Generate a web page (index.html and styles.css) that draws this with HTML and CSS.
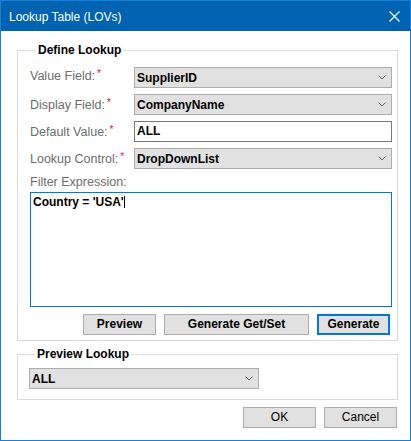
FILE: index.html
```html
<!DOCTYPE html>
<html lang="en">
<head>
<meta charset="utf-8">
<title>Lookup Table (LOVs)</title>
<link rel="stylesheet" href="styles.css">
</head>
<body>
<div class="window">
  <div class="titlebar">
    <span class="title">Lookup Table (LOVs)</span>
    <svg class="close" width="11" height="11" viewBox="0 0 11 11"><path d="M0.5 0.5 L10.5 10.5 M10.5 0.5 L0.5 10.5" stroke="#fff" stroke-width="1.1" fill="none"/></svg>
  </div>
  <div class="client">
    <fieldset class="group group-define">
      <legend>Define Lookup</legend>
      <div class="form">
        <label class="lbl lbl-first">Value Field:<span class="req">*</span></label>
        <div class="combo"><span class="combo-text">SupplierID</span><svg class="chev" width="8" height="5" viewBox="0 0 8 5"><polyline points="0.5,0.5 4,4 7.5,0.5" fill="none" stroke="#6a6a6a" stroke-width="1"/></svg></div>
        <label class="lbl">Display Field:<span class="req">*</span></label>
        <div class="combo"><span class="combo-text">CompanyName</span><svg class="chev" width="8" height="5" viewBox="0 0 8 5"><polyline points="0.5,0.5 4,4 7.5,0.5" fill="none" stroke="#6a6a6a" stroke-width="1"/></svg></div>
        <label class="lbl">Default Value:<span class="req">*</span></label>
        <div class="textbox">ALL</div>
        <label class="lbl">Lookup Control:<span class="req">*</span></label>
        <div class="combo"><span class="combo-text">DropDownList</span><svg class="chev" width="8" height="5" viewBox="0 0 8 5"><polyline points="0.5,0.5 4,4 7.5,0.5" fill="none" stroke="#6a6a6a" stroke-width="1"/></svg></div>
      </div>
      <div class="filter-label">Filter Expression:</div>
      <div class="textarea"><span class="ta-text">Country = 'USA'</span><span class="caret"></span></div>
      <div class="actions">
        <button class="btn btn-bold btn-preview">Preview</button>
        <button class="btn btn-bold btn-wide">Generate Get/Set</button>
        <button class="btn btn-bold btn-default">Generate</button>
      </div>
    </fieldset>
    <fieldset class="group group-preview">
      <legend>Preview Lookup</legend>
      <div class="combo combo-preview"><span class="combo-text">ALL</span><svg class="chev" width="8" height="5" viewBox="0 0 8 5"><polyline points="0.5,0.5 4,4 7.5,0.5" fill="none" stroke="#6a6a6a" stroke-width="1"/></svg></div>
    </fieldset>
    <div class="footer">
      <button class="btn">OK</button>
      <button class="btn">Cancel</button>
    </div>
  </div>
</div>
</body>
</html>
```

FILE: styles.css
```css
* { box-sizing: border-box; }
html, body { margin: 0; padding: 0; background: #ffffff; }
body { font-family: "Liberation Sans", Arial, sans-serif; font-size: 12px; }

.window {
  width: 411px;
  height: 441px;
  border: 1px solid #1a7fd6;
  background: #ffffff;
  display: flex;
  flex-direction: column;
}

.titlebar {
  height: 30px;
  background: #0063b1;
  display: flex;
  align-items: center;
  justify-content: space-between;
  padding: 0 10px 0 8px;
  flex: none;
}
.title {
  color: #ffffff;
  font-size: 12px;
  line-height: 14px;
  padding-top: 1px;
}
.close { display: block; margin-top: 1px; }

.client {
  padding: 0 12px 0 16px;
  display: flex;
  flex-direction: column;
}

.group {
  margin: 0;
  padding: 0;
  border: 1px solid #dcdcdc;
  min-width: 0;
}
.group legend {
  font-weight: bold;
  font-size: 12px;
  line-height: 14px;
  color: #000;
  padding: 0 2px;
  margin-left: 6px;
}

.group-define {
  margin-top: 12px;
  padding: 10px 5px 5px 12px;
}

.form {
  display: grid;
  grid-template-columns: 104px 1fr;
  grid-auto-rows: 21px;
  row-gap: 6px;
}

.lbl {
  color: #6d6d6d;
  font-size: 12.5px;
  line-height: 14px;
  padding-top: 2px;
  white-space: nowrap;
}
.lbl-first { padding-top: 0; }
.req {
  color: #e81123;
  font-size: 10px;
  margin-left: 2px;
  vertical-align: 3px;
}

.combo {
  height: 21px;
  background: #e1e1e1;
  border: 1px solid #adadad;
  display: flex;
  align-items: center;
  justify-content: space-between;
  padding: 0 5px 0 2px;
}
.combo-text {
  font-weight: bold;
  color: #000;
  line-height: 14px;
}
.chev { display: block; }

.textbox {
  height: 21px;
  border: 1px solid #7a7a7a;
  background: #fff;
  font-weight: bold;
  color: #000;
  line-height: 19px;
  padding-left: 2px;
}

.filter-label {
  color: #6d6d6d;
  font-size: 12.5px;
  line-height: 14px;
  margin-top: 6px;
}

.textarea {
  margin-top: 3px;
  height: 115px;
  border: 1px solid #0078d7;
  padding: 2px 2px;
  display: flex;
  align-items: flex-start;
}
.ta-text {
  font-weight: bold;
  color: #000;
  line-height: 14px;
}
.caret {
  width: 1px;
  height: 12px;
  background: #000;
  margin-top: 1px;
}

.actions {
  margin-top: 7px;
  display: flex;
  justify-content: flex-end;
  gap: 8px;
  padding-right: 2px;
}

.btn {
  height: 21px;
  width: 73px;
  background: #e1e1e1;
  border: 1px solid #adadad;
  font-family: "Liberation Sans", Arial, sans-serif;
  font-size: 12px;
  color: #000;
  padding: 0;
  line-height: 19px;
  border-radius: 0;
}
.btn-bold { font-weight: bold; }
.btn-wide { width: 145px; }
.btn-default { border: 2px solid #0078d7; line-height: 17px; }

.group-preview {
  margin-top: 6px;
  padding: 7px 0 10px 11px;
}
.combo-preview { width: 230px; }

.footer {
  margin-top: 7px;
  display: flex;
  justify-content: flex-end;
  gap: 8px;
  padding-right: 1px;
}
```
